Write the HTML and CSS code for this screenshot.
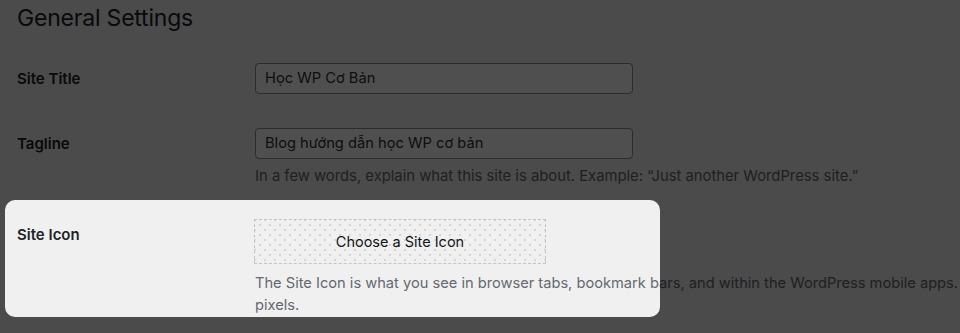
FILE: index.html
```html
<!DOCTYPE html>
<html lang="vi">
<head>
<meta charset="utf-8">
<title>General Settings</title>
<link rel="stylesheet" href="styles.css">
</head>
<body>
<div class="wrap">
  <h1 class="page-title">General Settings</h1>
  <div class="form-table">
    <div class="row row-title">
      <div class="label">Site Title</div>
      <div class="field">
        <div class="input">Học WP Cơ Bản</div>
      </div>
    </div>
    <div class="row row-tagline">
      <div class="label">Tagline</div>
      <div class="field">
        <div class="input">Blog hướng dẫn học WP cơ bản</div>
        <p class="description">In a few words, explain what this site is about. Example: “Just another WordPress site.”</p>
      </div>
    </div>
    <div class="row row-icon">
      <div class="label label-icon">Site Icon</div>
      <div class="field">
        <div class="icon-button">Choose a Site Icon</div>
        <p class="description desc-icon">The Site Icon is what you see in browser tabs, bookmark bars, and within the WordPress mobile apps. It should be square and at least 512 by 512 pixels.</p>
      </div>
    </div>
  </div>
</div>
<div class="spotlight"></div>
</body>
</html>
```
FILE: styles.css
```css
html, body {
  margin: 0;
  padding: 0;
  overflow: hidden;
  width: 960px;
  height: 333px;
}
body {
  background: #f0f0f1;
  color: #1d2327;
  font-family: Inter, "Noto Sans", sans-serif;
  position: relative;
}
.wrap {
  padding-left: 17px;
  width: 1400px;
}
.page-title {
  margin: 0;
  padding-top: 3px;
  font-size: 23px;
  font-weight: 400;
  line-height: 30px;
  height: 30px;
  letter-spacing: -0.2px;
}
.form-table {
  display: flex;
  flex-direction: column;
  padding-top: 30px;
}
.row {
  display: flex;
  align-items: flex-start;
}
.label {
  width: 238px;
  flex: none;
  font-size: 15px;
  font-weight: 600;
  line-height: 31px;
}
.field {
  flex: none;
  width: 1045px;
}
.input {
  box-sizing: border-box;
  width: 378px;
  height: 31px;
  border: 1px solid #8c8f94;
  border-radius: 4px;
  background: #fff;
  padding: 0 9px;
  font-size: 14.7px;
  line-height: 29px;
  color: #2c3338;
}
.row-tagline {
  margin-top: 34px;
}
.description {
  margin: 6px 0 0;
  font-size: 14.8px;
  line-height: 22px;
  color: #646970;
}
.row-icon {
  margin-top: 32px;
}
.label-icon {
  line-height: 22px;
  padding-top: 5px;
}
.icon-button {
  box-sizing: border-box;
  width: 292px;
  height: 45px;
  margin-left: -1px;
  border: 1px dashed #c3c4c7;
  background-color: #f0f0f1;
  background-image:
    radial-gradient(circle, #d4d4d6 0.7px, transparent 1px),
    radial-gradient(circle, #d4d4d6 0.7px, transparent 1px);
  background-size: 10px 10px;
  background-position: 0 0, 5px 5px;
  display: flex;
  align-items: center;
  justify-content: center;
  font-size: 14.5px;
  color: #101517;
}
.desc-icon {
  margin-top: 8px;
  font-size: 14.65px;
}
.spotlight {
  position: absolute;
  left: 5px;
  top: 200px;
  width: 655px;
  height: 117px;
  border-radius: 10px;
  box-shadow: 0 0 0 2000px rgba(0, 0, 0, 0.69);
  pointer-events: none;
}
```
